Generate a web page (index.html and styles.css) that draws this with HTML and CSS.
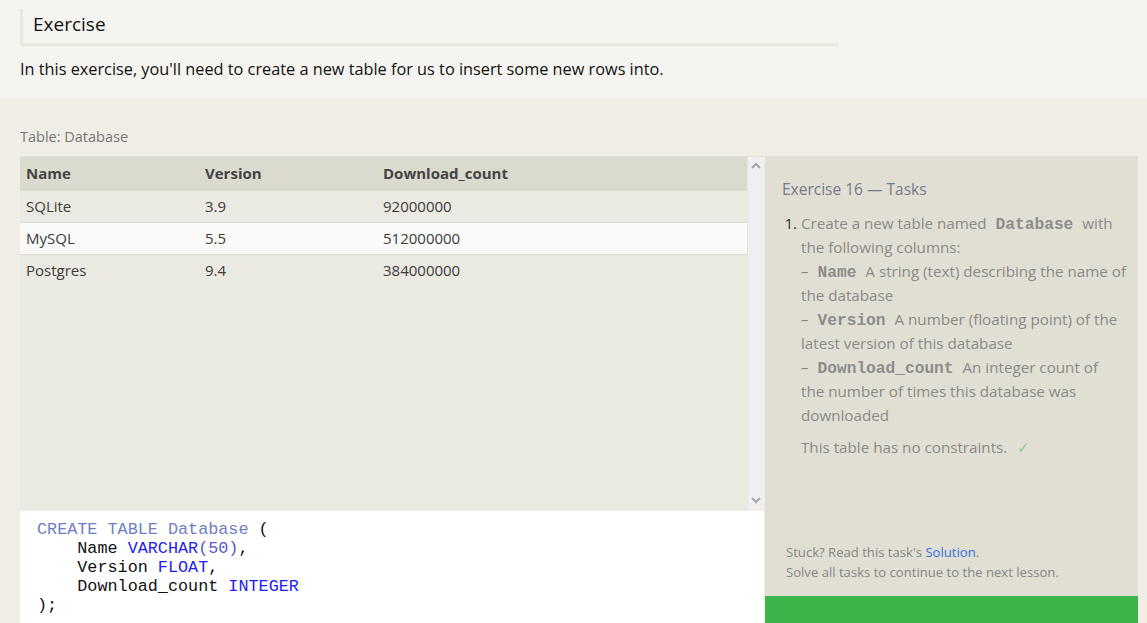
FILE: index.html
```html
<!DOCTYPE html>
<html>
<head>
<meta charset="utf-8">
<link rel="stylesheet" href="styles.css">
</head>
<body>
<section class="intro">
  <h1 class="intro-title">Exercise</h1>
  <p class="intro-text">In this exercise, you'll need to create a new table for us to insert some new rows into.</p>
</section>
<section class="workspace">
  <div class="caption">Table: Database</div>
  <div class="panes">
    <div class="left">
      <div class="results">
        <div class="table-wrap">
          <table class="data">
            <thead>
              <tr><th>Name</th><th>Version</th><th>Download_count</th></tr>
            </thead>
            <tbody>
              <tr><td>SQLite</td><td>3.9</td><td>92000000</td></tr>
              <tr class="alt"><td>MySQL</td><td>5.5</td><td>512000000</td></tr>
              <tr><td>Postgres</td><td>9.4</td><td>384000000</td></tr>
            </tbody>
          </table>
        </div>
        <div class="scrollbar">
          <svg class="arrow" width="10" height="7" viewBox="0 0 10 7"><path d="M1 6 L5 2 L9 6" fill="none" stroke="#a6a6a6" stroke-width="2"/></svg>
          <svg class="arrow" width="10" height="7" viewBox="0 0 10 7"><path d="M1 1 L5 5 L9 1" fill="none" stroke="#a6a6a6" stroke-width="2"/></svg>
        </div>
      </div>
      <pre class="editor"><span class="code-line"><span class="kw-soft">CREATE TABLE Database</span> (</span><span class="code-line">    Name <span class="kw">VARCHAR</span><span class="num">(50)</span>,</span><span class="code-line">    Version <span class="kw">FLOAT</span>,</span><span class="code-line">    Download_count <span class="kw">INTEGER</span></span><span class="code-line">);</span></pre>
    </div>
    <aside class="tasks">
      <h2 class="tasks-title">Exercise 16 — Tasks</h2>
      <ol class="task-list">
        <li>
          <span class="task-text">Create a new table named <code>Database</code> with the following columns:<br>– <code>Name</code> A string (text) describing the name of the database<br>– <code>Version</code> A number (floating point) of the latest version of this database<br>– <code>Download_count</code> An integer count of<br>the number of times this database was downloaded</span>
          <p class="task-note">This table has no constraints. <span class="check">✓</span></p>
        </li>
      </ol>
      <div class="spacer"></div>
      <p class="stuck">Stuck? Read this task's <a href="#" class="link">Solution</a>.<br>Solve all tasks to continue to the next lesson.</p>
      <div class="continue"></div>
    </aside>
  </div>
</section>
</body>
</html>
```

FILE: styles.css
```css
* { box-sizing: border-box; }
html, body { margin: 0; padding: 0; }
body {
  background: #efede6;
  font-family: "Open Sans", "Noto Sans", sans-serif;
  color: #222;
  height: 623px;
  overflow: hidden;
}
.intro {
  background: #f5f4f0;
  height: 98px;
  padding: 9px 20px 0 20px;
}
.intro-title {
  margin: 0;
  width: 818px;
  height: 37px;
  border-left: 3px solid #e9e8df;
  border-bottom: 3px solid #e9e8df;
  padding-left: 10px;
  font-weight: 400;
  font-size: 19px;
  line-height: 31px;
  color: #111;
}
.intro-text {
  margin: 12px 0 0 0;
  font-size: 16.3px;
  line-height: 22px;
  color: #111;
}
.workspace {
  padding: 29px 0 0 20px;
}
.caption {
  font-size: 14.5px;
  line-height: 20px;
  color: #787878;
  margin-bottom: 9px;
}
.panes {
  display: flex;
  gap: 1px;
}
.left {
  width: 744px;
  display: flex;
  flex-direction: column;
  gap: 1px;
}
.results {
  display: flex;
  height: 354px;
  background: #eae9e2;
  border-top: 1px solid #e3e2da;
}
.table-wrap {
  flex: 1;
  border-right: 1px solid #e6e5de;
}
.data {
  width: 100%;
  border-collapse: collapse;
  font-size: 15px;
  color: #3c3c3c;
}
.data th, .data td {
  text-align: left;
  padding: 0 6px;
}
.data th:nth-child(1), .data td:nth-child(1) { width: 179px; }
.data th:nth-child(2), .data td:nth-child(2) { width: 178px; }
.data th {
  background: #dbdacf;
  height: 33px;
  font-weight: 700;
  color: #444;
}
.data td {
  height: 32px;
  border-top: 1px solid #dcdbd4;
  background: #eae9e2;
}
.data tr.alt td { background: #f9f9f8; }
.scrollbar {
  width: 16px;
  background: #efefef;
  display: flex;
  flex-direction: column;
  justify-content: space-between;
  align-items: center;
  padding: 5px 0 6px 0;
}
.arrow { display: block; }
.editor {
  margin: 0;
  height: 130px;
  background: #fff;
  padding: 9px 17px;
  font-family: "Liberation Mono", "Courier New", monospace;
  font-size: 16.8px;
  line-height: 19px;
  color: #111;
}
.code-line { display: block; height: 19px; }
.kw-soft { color: #6f7ec4; }
.kw { color: #1d1df2; }
.num { color: #5757c8; }
.tasks {
  width: 373px;
  height: 467px;
  background: #e1dfd4;
  display: flex;
  flex-direction: column;
  padding: 0;
}
.tasks-title {
  margin: 22px 17px 0 17px;
  font-weight: 400;
  font-size: 15.5px;
  line-height: 22px;
  color: #737b8c;
}
.task-list {
  margin: 11px 11px 0 36px;
  padding: 0;
  font-size: 15.2px;
  line-height: 24px;
  color: #8a8a8a;
}
.task-list li::marker { color: #333; }
.task-list code {
  font-family: "Liberation Mono", "Courier New", monospace;
  font-weight: 700;
  font-size: 16.2px;
  line-height: 0;
  color: #8c8c8c;
  padding: 0 5px;
}
.task-note {
  margin: 8px 0 0 0;
}
.check { color: #8fca8f; margin-left: 6px; }
.spacer { flex: 1; }
.stuck {
  margin: 0 14px 14px 21px;
  font-size: 13.1px;
  line-height: 20px;
  color: #858585;
}
.link { color: #2f72dc; text-decoration: none; }
.continue {
  height: 27px;
  background: #3bb44a;
  flex: none;
}
```
